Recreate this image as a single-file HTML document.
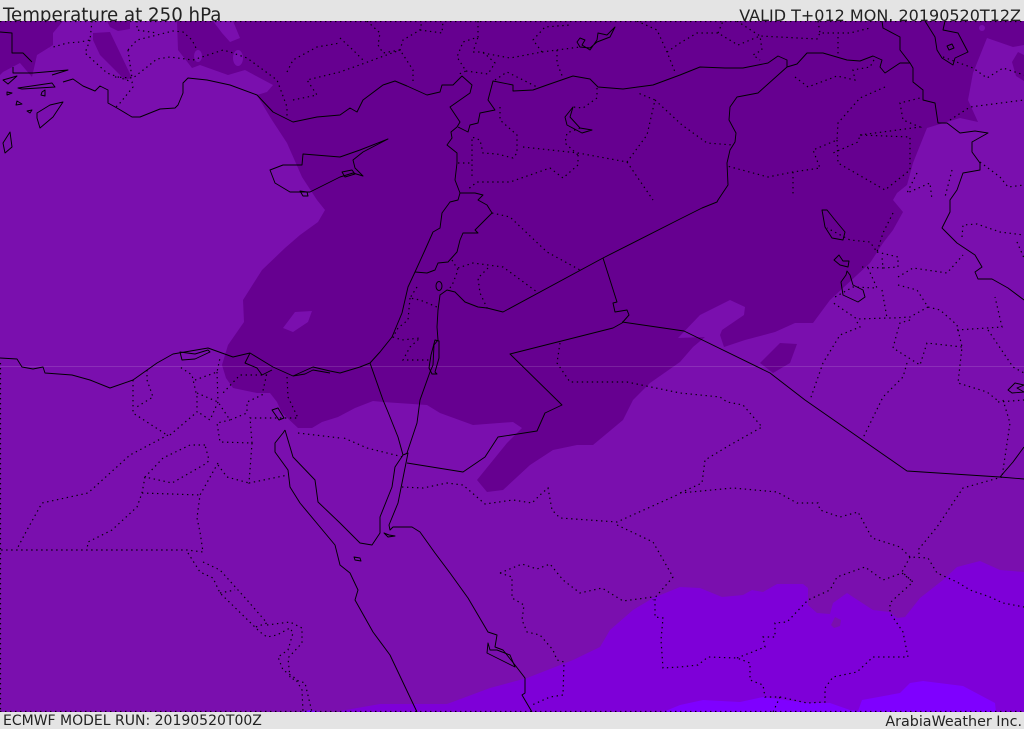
<!DOCTYPE html>
<html><head><meta charset="utf-8"><style>
html,body{margin:0;padding:0;background:#e4e4e4}
svg{display:block}
text{font-family:"DejaVu Sans",sans-serif;fill:#222}
.c{fill:none;stroke:#000;stroke-width:.95;stroke-linejoin:round}
.d{fill:none;stroke:#000;stroke-width:1.2;stroke-dasharray:1.4 3.6;opacity:.95}
</style></head><body>
<svg width="1024" height="729" viewBox="0 0 1024 729" xmlns="http://www.w3.org/2000/svg">
<rect width="1024" height="729" fill="#e4e4e4"/>
<text x="3" y="21" font-size="18.2">Temperature at 250 hPa</text>
<text x="1021" y="21" font-size="16" text-anchor="end">VALID T+012 MON. 20190520T12Z</text>
<text x="3" y="725" font-size="14">ECMWF MODEL RUN: 20190520T00Z</text>
<text x="1022" y="726" font-size="14.3" text-anchor="end">ArabiaWeather Inc.</text>
<svg x="0" y="21" width="1024" height="691" viewBox="0 21 1024 691">
<rect x="0" y="21" width="1024" height="691" fill="#7a0fae"/>
<g fill="#660090">
<path d="M0 21L63 21L53 33L53 45L37 55L32 77L20 63L3 72L0 75Z"/>
<path d="M177 21L178 50L192 68L200 65L228 75L245 70L273 85L267 92L257 95L270 117L287 143L302 177L317 200L325 210L318 222L300 235L285 248L262 270L243 300L244 322L228 345L222 365L226 378L233 388L257 393L270 393L277 402L282 413L298 428L312 428L322 422L338 417L355 408L373 401L383 402L427 405L440 413L473 425L513 422L522 428L507 443L477 480L487 492L503 490L530 465L553 450L577 445L593 445L623 420L633 400L650 383L680 362L693 347L705 337L678 338L700 315L730 300L745 307L744 315L722 330L720 335L724 347L745 340L775 332L795 323L813 323L830 300L870 263L883 243L893 230L903 212L893 200L897 193L907 185L913 163L927 128L960 118L978 122L968 100L973 73L987 38L1013 47L1024 45L1024 21Z"/>
<path d="M107 21L130 21L130 29L118 31L110 27Z"/>
<path d="M93 33L110 32L132 78L125 80L100 55L93 40Z"/>
<path d="M760 363L780 343L797 344L790 363L773 373Z"/>
<path d="M1018 52L1024 55L1024 81L1016 76L1012 62Z"/>
</g>
<g fill="#7a0fae">
<path d="M283 328L295 312L312 311L308 322L293 332Z"/>
<ellipse cx="198" cy="56" rx="4" ry="6"/>
<ellipse cx="238" cy="58" rx="5" ry="8"/>
<path d="M213 21L222 33L230 42L240 38L233 21Z"/>
<circle cx="982" cy="28" r="3"/>
</g>
<path fill="#7e00d8" d="M340 711L380 704L447 704L490 688L527 678L573 660L600 647L610 630L633 610L653 598L680 587L700 588L722 597L743 595L752 590L763 592L777 584L803 584L808 588L808 605L817 613L830 614L833 603L847 593L853 597L873 610L890 612L897 618L905 617L920 598L943 580L957 567L980 561L1000 570L1024 572L1024 712L340 712Z"/>
<path fill="#7a0fae" d="M831 625L835 617L841 620L840 626L834 628Z"/>
<g fill="#7f00ff">
<path d="M663 712L680 705L703 700L740 702L763 697L807 703L830 703L850 710L858 711L862 700L900 693L910 683L923 681L963 686L995 703L996 712Z"/>
<path d="M302 712L310 710L320 712Z"/>
</g>
<rect x="0" y="366" width="1024" height="1" fill="#fff" opacity=".13"/>
<g class="c">
<path d="M0 32L12 33L12 53L23 53L32 62"/>
<path d="M13 67L13 73L33 73L68 70L52 75"/>
<path d="M37 118L40 128L53 117L63 102L50 105L37 113Z"/>
<path d="M3 143L10 132L12 147L5 153Z"/>
<path d="M18 88L52 83L55 87L22 89Z"/>
<path d="M3 80L17 76L8 84Z"/>
<path d="M7 92L12 93L7 95Z"/>
<path d="M17 101L22 104L16 105Z"/>
<path d="M27 111L32 110L30 113Z"/>
<path d="M42 92L45 90L45 96L41 95Z"/>
<path d="M63 82L73 79L83 86L95 91L100 86L108 90L108 103L117 108L132 117L140 117L160 109L175 108L178 105L183 93L183 83L188 78L207 80L230 85L257 95L273 112L293 122L317 117L340 115L350 108L357 112L363 100L383 85L395 81L407 86L427 95L440 92L442 85L453 85L462 76L472 85L470 93L450 107L460 122L457 127L451 132L452 138L447 145L457 153L457 163L455 180L460 193L458 200L450 202L442 213L440 228L433 232L425 250L415 272L408 287L402 313L392 337L380 352L370 363L360 367L340 373L330 371L313 367L293 376L273 367L250 353L233 357L208 348L173 354L157 363L133 380L110 388L90 380L72 375L45 373L43 367L33 369L22 367L17 359L0 358"/>
<path d="M180 352L195 354L208 350L210 352L195 359L182 360Z"/>
<path d="M250 353L245 363L257 368L262 375L272 370"/>
<path d="M293 376L305 374L313 370L330 373"/>
<path d="M285 430L283 433L275 443L275 452L288 470L290 487L300 503L320 527L335 545L340 565L350 573L358 590L355 600L373 632L390 655L408 693L417 712"/>
<path d="M285 430L293 457L315 480L318 502L340 523L360 543L372 545L380 533L380 517L392 487L395 467L403 455L408 453L398 503L389 525L390 530L393 527L412 527L420 532L435 553L450 573L468 598L488 632L497 635L495 647L503 650L515 665L525 678L525 693L522 695L532 712"/>
<path d="M272 410L278 408L284 418L279 420Z"/>
<path d="M354 557L360 558L361 561L355 560Z"/>
<path d="M384 533L389 535L395 536L388 537Z"/>
<path d="M488 643L487 653L507 663L515 667L510 655L497 650L490 650Z"/>
<path d="M415 272L427 273L435 270L438 263L448 262L457 252L460 240L463 233L478 233L475 230L483 222L492 213L487 205L478 200L483 195L475 193L460 193"/>
<path d="M458 127L468 132L470 125L478 123L480 113L495 110L488 100L493 81L513 85L513 91L533 90L547 85L573 76L590 79L598 87L623 89L653 85L680 75L700 67L725 68L743 68L768 63L778 56L787 60L787 67L797 64L807 53L823 53L847 60L860 61L873 56L882 60L880 67L885 73L900 63L910 63L913 68L913 82L923 90L923 100L935 103L938 123L947 123L960 133L975 131L988 133L972 142L972 152L980 163L980 170L963 173L957 190L950 200L950 212L942 228L957 243L975 255L982 267L975 272L978 279L992 279L1008 288L1024 300"/>
<path d="M910 63L900 50L900 37L883 28L882 21"/>
<path d="M925 21L935 37L937 50L942 58L953 65L955 58L968 52L958 33L943 30L945 21"/>
<path d="M947 46L952 44L954 48L949 50Z"/>
<path d="M787 67L758 93L737 97L730 107L729 120L736 133L735 142L730 150L727 163L728 185L718 200L717 202L702 208L680 219L603 258L503 312L487 308L478 307L465 302L455 292L447 290L440 295L438 310L437 327L438 340L434 345L433 365L430 372L420 400L417 423L407 453"/>
<path d="M435 340L439 341L439 358L435 372L437 374L432 374L429 368L431 355Z"/>
<ellipse cx="439" cy="286" rx="3" ry="4.5"/>
<path d="M370 363L383 400L388 412L398 437L403 455"/>
<path d="M407 463L463 472L485 457L498 437L537 431L545 413L562 405L510 354L613 328L622 323L629 315L627 310L615 312L613 303L617 302L603 258"/>
<path d="M622 322L684 331L770 373L805 400L907 471L1000 477L1024 479"/>
<path d="M1000 477L1013 462L1024 447"/>
<path d="M270 170L283 165L302 165L303 154L340 157L360 150L388 139L363 152L353 160L355 168L363 176L353 173L340 177L310 192L290 192L275 183Z"/>
<path d="M342 172L352 170L355 174L345 177Z"/>
<path d="M300 191L307 192L308 196L303 196Z"/>
<path d="M822 210L825 227L832 238L843 240L845 232L835 220L827 210Z"/>
<path d="M834 260L839 255L843 261L849 261L848 267L840 265Z"/>
<path d="M847 271L846 275L841 282L843 295L858 302L865 297L863 290L853 285L850 275Z"/>
<path d="M577 42L580 38L585 40L582 45L590 50L597 40L598 33L607 35L615 27L610 37L597 42L590 48L580 47Z"/>
<path d="M565 117L573 107L570 117L580 128L592 130L582 133L567 125Z"/>
<path d="M1008 390L1015 383L1024 385L1017 388L1024 392L1012 393Z"/>
</g>
<g class="d">
<path d="M92 21L90 40L80 42L67 43L50 48"/>
<path d="M90 40L85 53L107 73L132 82L133 87L120 103L115 108"/>
<path d="M115 77L133 78L147 67L157 59L170 57L193 60L223 50L230 52L247 58L277 80L280 88L287 107L287 117"/>
<path d="M128 50L137 40L173 31L183 32L192 40L197 50"/>
<path d="M128 50L132 78"/>
<path d="M137 21L137 30L157 33"/>
<path d="M293 100L317 95L307 80L340 72L365 63L400 50L403 40L420 30L422 21"/>
<path d="M287 72L293 60L317 47L340 43"/>
<path d="M367 21L380 33L378 45L383 53L400 50L413 70L413 83"/>
<path d="M420 30L442 33L443 21"/>
<path d="M340 38L353 50L365 62"/>
<path d="M478 21L478 37L463 42L457 57L466 71L457 75"/>
<path d="M466 71L488 74L495 63L483 52L473 52L478 37"/>
<path d="M483 53L510 58L542 52L533 40L545 27L570 25"/>
<path d="M542 52L557 50L580 47"/>
<path d="M557 50L557 63L563 78"/>
<path d="M495 80L507 72L537 87"/>
<path d="M637 21L657 30L667 52L675 72"/>
<path d="M667 52L680 43L697 33L718 33L738 45L760 36L817 39L820 33L850 33L870 28"/>
<path d="M718 33L723 21"/>
<path d="M737 21L760 36L762 50L753 55L760 60"/>
<path d="M818 21L820 33"/>
<path d="M838 37L838 57"/>
<path d="M597 88L597 98L583 108L573 107"/>
<path d="M580 128L567 133L565 143L578 155"/>
<path d="M500 107L500 120L517 135L517 153L513 158L497 154L483 153L480 140L472 137L472 177"/>
<path d="M458 163L472 163"/>
<path d="M523 147L578 153L627 162L647 135L655 100L638 93"/>
<path d="M655 100L682 125L707 143L733 145"/>
<path d="M627 162L653 200"/>
<path d="M578 155L578 165L563 178L550 168L510 182L477 182L467 190"/>
<path d="M795 77L808 87L837 76L855 80L853 70L870 67L875 58"/>
<path d="M885 87L860 98L838 123L837 140L813 150L820 168L793 172L768 177L727 166"/>
<path d="M793 172L793 197"/>
<path d="M837 140L838 163L885 190L910 170L910 137L860 135L858 142L833 153"/>
<path d="M860 135L920 127L903 120L900 103L920 98"/>
<path d="M950 120L970 107L1024 100"/>
<path d="M943 57L973 68L987 78L1003 68L1024 75"/>
<path d="M980 162L1000 177L1008 187L1024 185"/>
<path d="M952 170L945 197"/>
<path d="M917 173L907 193L930 183L932 200"/>
<path d="M893 213L883 233L877 252L870 242L850 240L827 228"/>
<path d="M877 252L898 257L898 267L883 268L882 257"/>
<path d="M862 267L883 268"/>
<path d="M868 268L877 288L853 287L835 297"/>
<path d="M882 290L887 318L857 319L832 302"/>
<path d="M898 277L913 268L947 273L963 255"/>
<path d="M962 237L963 225L977 224L1000 232L1024 235"/>
<path d="M898 285L917 290L928 307L940 310L957 325L962 347L958 383L987 392L997 400"/>
<path d="M928 307L910 317L893 318L887 318"/>
<path d="M910 320L900 323L897 333L893 348L920 365L927 343L962 347"/>
<path d="M957 330L1002 327L995 297"/>
<path d="M988 330L1013 367L1024 373"/>
<path d="M1017 242L1024 258"/>
<path d="M857 322L860 327L840 335L823 363L810 400"/>
<path d="M907 363L903 377L883 397L862 440"/>
<path d="M560 343L557 363L570 382L627 382L680 393L720 397L727 402L743 405L762 427L730 445L705 460L702 483L680 493"/>
<path d="M680 493L733 488L777 492L797 503L818 503L820 510L840 517L858 512L872 538L900 547L910 557L928 558L937 573L957 582L970 590L990 597L1003 603L1024 607"/>
<path d="M1002 477L963 488L937 527L918 550L920 557"/>
<path d="M1003 400L1010 423L1002 477"/>
<path d="M998 402L1024 400"/>
<path d="M910 557L902 572L913 582L893 600L890 603L890 613L903 632L908 657L873 657L857 672L833 677L825 688L825 702L807 703L780 697L765 697L763 685L750 680L750 663L737 658L708 657L698 665L680 667L663 668L661 640L663 618L655 617L655 598"/>
<path d="M737 658L765 647L763 637L775 637L775 623L787 622L808 600L830 590L837 577L865 567L883 580L902 573L913 582"/>
<path d="M780 697L773 712"/>
<path d="M500 573L522 564L537 569L550 564L563 580L580 593L602 588L623 601L653 597"/>
<path d="M500 573L512 577L512 598L524 605L522 620L527 632L540 635L553 650L557 660L564 662L563 695L550 697L532 705"/>
<path d="M344 438L367 448L403 457"/>
<path d="M402 487L423 488L447 483L463 485L485 504L513 500L532 503L540 495L548 488L552 510L560 518L617 522L677 495"/>
<path d="M617 525L653 542L673 577L653 600"/>
<path d="M492 213L510 217L547 252L580 270"/>
<path d="M452 260L458 270L453 283L450 288"/>
<path d="M458 268L473 263L503 267L537 292"/>
<path d="M488 268L478 278L480 293L488 310"/>
<path d="M417 287L410 298L420 300L437 307"/>
<path d="M410 298L408 320L398 328L393 337L402 340L420 338L410 347L403 360L430 360"/>
<path d="M0.5 363L0.5 712"/>
<path d="M133 380L133 413L167 435"/>
<path d="M147 370L147 380L153 397L135 408"/>
<path d="M170 435L197 412L197 397L192 375L180 367"/>
<path d="M195 380L217 372L220 358"/>
<path d="M217 372L218 402L210 420L198 412"/>
<path d="M197 393L218 402L230 420L247 413L247 402L262 395L267 373"/>
<path d="M267 375L240 375L223 393"/>
<path d="M287 377L288 397L298 418L277 418L250 418L252 443L220 442L217 423L230 420"/>
<path d="M252 443L249 483L288 475"/>
<path d="M218 465L227 477L249 483"/>
<path d="M298 433L340 438"/>
<path d="M168 435L130 455L88 493L42 503L27 530L18 547"/>
<path d="M205 445L190 445L163 458L145 477L172 483L207 463L209 460Z"/>
<path d="M145 477L142 493L137 507L112 530L88 542L87 550"/>
<path d="M142 493L200 495"/>
<path d="M218 463L200 495L197 518L200 532L203 552L187 550L0 550"/>
<path d="M188 553L200 572L213 578L220 593L260 632L267 637L277 635L290 628L293 633L288 650L278 657L283 670L295 678L302 690L303 712"/>
<path d="M203 562L220 570L247 600L267 623L253 628"/>
<path d="M267 625L290 622L302 628L302 643L288 658L290 678L305 683L312 712"/>
<path d="M220 593L235 590"/>
<path d="M0 21.5L1024 21.5"/>
<path d="M0 711.5L1024 711.5"/>
</g>
</svg>
</svg>
</body></html>
